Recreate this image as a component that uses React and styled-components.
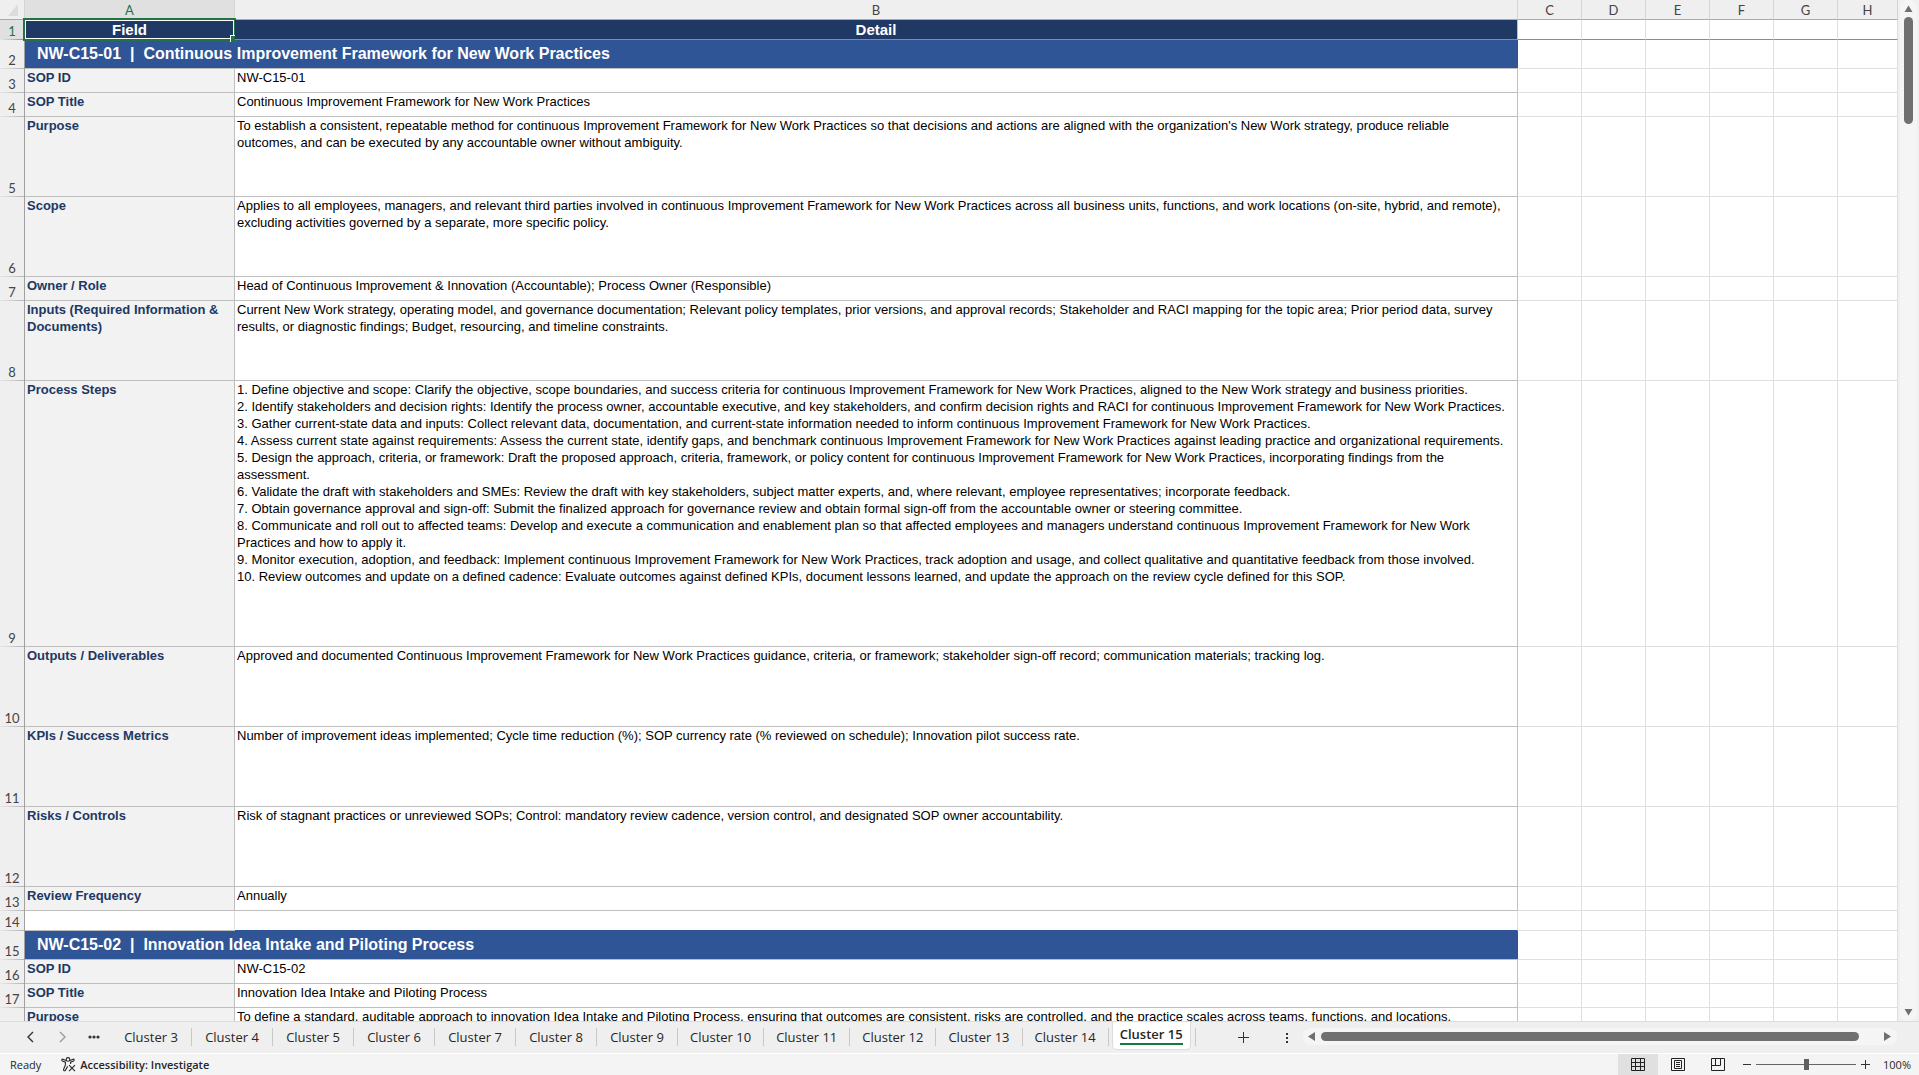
import { Fragment } from 'react';

import styled, { createGlobalStyle, css } from 'styled-components';

const GlobalStyle = createGlobalStyle`
  * {
    box-sizing: border-box;
  }

  body {
    margin: 0;
    background: #f0f0f0;
    overflow: hidden;
  }

  button,
  input {
    margin: 0;
    padding: 0;
    border: 0;
    background: none;
    font: inherit;
    color: inherit;
  }
`;

const uiFont = `'Open Sans', 'Noto Sans', sans-serif`;
const headFont = `Lato, 'Open Sans', sans-serif`;
const cellFont = `'Liberation Sans', Arial, sans-serif`;

const Workbook = styled.div`
  height: 100vh;
  display: flex;
  flex-direction: column;
  font-family: ${uiFont};
  color: #262626;
`;

const SheetArea = styled.main`
  flex: 1;
  min-height: 0;
  display: flex;
  border-bottom: 1px solid #dcdcdc;
`;

const GridClip = styled.div`
  flex: 1;
  min-width: 0;
  overflow: hidden;
`;

const Grid = styled.table`
  width: 100%;
  table-layout: fixed;
  border-collapse: separate;
  border-spacing: 0;
  background: white;

  th,
  td {
    padding: 0;
  }
`;

const Col = styled.col`
  width: ${(props) => (props.$width ? `${props.$width}px` : 'auto')};
`;

const Row = styled.tr`
  height: ${(props) => props.$height}px;
`;

const ColumnHead = styled.th`
  border-right: 1px solid #d4d4d4;
  border-bottom: 1px solid #ababab;
  background: ${(props) => (props.$active ? '#e0e0e0' : '#efefef')};
  color: ${(props) => (props.$active ? '#217346' : '#444')};
  font-family: ${headFont};
  font-size: 13px;
  font-weight: 400;
  line-height: 18px;
  vertical-align: bottom;
`;

const Corner = styled(ColumnHead)`
  background: #efefef;

  svg {
    display: block;
    margin: 0 0 3px 8px;
  }
`;

const RowHead = styled.th`
  border-right: 1px solid #a0a0a0;
  background:
    linear-gradient(to right, #e8e8e8, ${(props) => (props.$frozen ? '#8c8c8c' : '#b4b4b4')})
      bottom / 100% 1px no-repeat,
    ${(props) => (props.$active ? '#e0e0e0' : '#efefef')};
  color: ${(props) => (props.$active ? '#217346' : '#444')};
  font-family: ${headFont};
  font-size: 13px;
  font-weight: 400;
  line-height: 18px;
  vertical-align: bottom;
`;

const cellText = css`
  font-family: ${cellFont};
  font-size: 13px;
  line-height: 17px;
  text-align: left;
  vertical-align: top;
  white-space: pre-line;
`;

const HeaderCell = styled.th`
  position: relative;
  border-right: 1px solid #bfbfbf;
  border-bottom: 1px solid #8c8c8c;
  background: #203864;
  color: white;
  font-family: ${cellFont};
  font-size: 15px;
  line-height: 18px;
`;

const Selection = styled.span`
  position: absolute;
  inset: -2px;
  border: 2px solid #217346;
  box-shadow: inset 0 0 0 1px white;

  &::after {
    content: '';
    position: absolute;
    right: -3px;
    bottom: -3px;
    width: 6px;
    height: 6px;
    border-top: 1px solid white;
    border-left: 1px solid white;
    background: #217346;
  }
`;

const SectionCell = styled.th`
  background: #2f5597;
  border-bottom: 1px solid #bfbfbf;
  color: white;
  font-family: ${cellFont};
  font-size: 16px;
  line-height: 20px;
  text-align: left;
  white-space: pre;

  && {
    padding-left: 12px;
  }
`;

const FieldCell = styled.th`
  ${cellText}
  border-right: 1px solid #bfbfbf;
  border-bottom: 1px solid #bfbfbf;
  background: #f2f2f2;
  color: #203864;

  && {
    padding-left: 2px;
  }
`;

const DetailCell = styled.td`
  ${cellText}
  border-right: 1px solid #bfbfbf;
  border-bottom: 1px solid #bfbfbf;
  color: black;

  && {
    padding-left: 2px;
  }
`;

const EmptyCell = styled.td`
  border-right: 1px solid #dfdfdf;
  border-bottom: 1px solid ${(props) => (props.$frozen ? '#8c8c8c' : '#dfdfdf')};
`;

const GapCell = styled(EmptyCell)`
  border-bottom-color: ${(props) => (props.$filled ? '#2f5597' : '#bfbfbf')};
`;

const VerticalBar = styled.div`
  width: 17px;
  margin: 0 2px;
  padding: 5px 0 4px;
  border-radius: 8px;
  background: #f5f5f5;
  display: flex;
  flex-direction: column;
  align-items: center;
`;

const VerticalThumb = styled.div`
  width: 9px;
  height: 107px;
  margin: 3px 0 auto;
  border-radius: 5px;
  background: #707070;
`;

const ArrowButton = styled.button`
  display: flex;
  align-items: center;
  justify-content: center;
`;

const TabBar = styled.nav`
  height: 31px;
  display: flex;
  align-items: flex-start;
  background: #efefef;
`;

const TabTools = styled.div`
  width: 111px;
  height: 30px;
  padding-left: 24px;
  display: flex;
  align-items: center;
  gap: 20px;
`;

const ToolButton = styled.button`
  display: flex;
  color: ${(props) => (props.$muted ? '#9a9a9a' : '#333')};
`;

const Tab = styled.button`
  min-width: 81px;
  height: 18px;
  margin-top: 6px;
  padding: 0 12px;
  border-right: 1px solid #c8c8c8;
  font-size: 13px;
  line-height: 18px;
  white-space: nowrap;
`;

const ActiveTab = styled.button`
  height: 28px;
  margin: 0 4px 0 3px;
  padding: 3px 7px 4px;
  border: 1px solid #dcdcdc;
  border-top: 0;
  border-radius: 0 0 5px 5px;
  background: white;
  font-size: 13px;
  font-weight: 600;
  line-height: 18px;
  white-space: nowrap;

  span {
    display: block;
    border-bottom: 2px solid #107c41;
  }
`;

const TabDivider = styled.span`
  width: 1px;
  height: 18px;
  margin-top: 6px;
  background: #c8c8c8;
`;

const AddButton = styled(ToolButton)`
  margin: 9px 0 0 41px;
`;

const MoreButton = styled(ToolButton)`
  margin: 10px 14px 0 36px;
`;

const HorizontalBar = styled.div`
  flex: 1;
  height: 17px;
  margin: 6px 22px 0 0;
  padding: 0 5px;
  border-radius: 8px;
  background: #f5f5f5;
  display: flex;
  align-items: center;
`;

const HorizontalThumb = styled.div`
  flex: 1;
  height: 9px;
  margin: 0 24px 0 4px;
  border-radius: 5px;
  background: #707070;
`;

const StatusBar = styled.footer`
  height: 22px;
  padding: 0 8px 0 10px;
  border-top: 1px solid white;
  background: #f4f4f4;
  display: flex;
  align-items: center;
  font-size: 11px;
  line-height: 18px;
`;

const AccessibilityButton = styled.button`
  margin-left: 20px;
  display: flex;
  align-items: center;
  gap: 4px;
  font-weight: 600;
`;

const ViewButtons = styled.div`
  margin-left: auto;
  display: flex;
`;

const ViewButton = styled.button`
  width: 40px;
  height: 21px;
  display: flex;
  align-items: center;
  justify-content: center;
  background: ${(props) => (props.$active ? '#e0e0e0' : 'transparent')};
`;

const Zoom = styled.div`
  margin-left: 5px;
  display: flex;
  align-items: center;
  gap: 5px;
`;

const ZoomSlider = styled.input`
  appearance: none;
  width: 100px;
  height: 11px;
  background: linear-gradient(#666, #666) center / 100% 1px no-repeat;

  &::-webkit-slider-thumb {
    appearance: none;
    width: 5px;
    height: 11px;
    background: #606060;
  }
`;

const ZoomValue = styled.span`
  min-width: 27px;
  margin-left: 8px;
  white-space: nowrap;
`;

const rows = [
  { type: 'section', height: 29, text: 'NW-C15-01  |  Continuous Improvement Framework for New Work Practices' },
  { height: 24, field: 'SOP ID', detail: 'NW-C15-01' },
  { height: 24, field: 'SOP Title', detail: 'Continuous Improvement Framework for New Work Practices' },
  {
    height: 80,
    field: 'Purpose',
    detail: `To establish a consistent, repeatable method for continuous Improvement Framework for New Work Practices so that decisions and actions are aligned with the organization's New Work strategy, produce reliable
outcomes, and can be executed by any accountable owner without ambiguity.`,
  },
  {
    height: 80,
    field: 'Scope',
    detail: `Applies to all employees, managers, and relevant third parties involved in continuous Improvement Framework for New Work Practices across all business units, functions, and work locations (on-site, hybrid, and remote),
excluding activities governed by a separate, more specific policy.`,
  },
  {
    height: 24,
    field: 'Owner / Role',
    detail: 'Head of Continuous Improvement & Innovation (Accountable); Process Owner (Responsible)',
  },
  {
    height: 80,
    field: 'Inputs (Required Information & Documents)',
    detail: `Current New Work strategy, operating model, and governance documentation; Relevant policy templates, prior versions, and approval records; Stakeholder and RACI mapping for the topic area; Prior period data, survey
results, or diagnostic findings; Budget, resourcing, and timeline constraints.`,
  },
  {
    height: 266,
    field: 'Process Steps',
    detail: `1. Define objective and scope: Clarify the objective, scope boundaries, and success criteria for continuous Improvement Framework for New Work Practices, aligned to the New Work strategy and business priorities.
2. Identify stakeholders and decision rights: Identify the process owner, accountable executive, and key stakeholders, and confirm decision rights and RACI for continuous Improvement Framework for New Work Practices.
3. Gather current-state data and inputs: Collect relevant data, documentation, and current-state information needed to inform continuous Improvement Framework for New Work Practices.
4. Assess current state against requirements: Assess the current state, identify gaps, and benchmark continuous Improvement Framework for New Work Practices against leading practice and organizational requirements.
5. Design the approach, criteria, or framework: Draft the proposed approach, criteria, framework, or policy content for continuous Improvement Framework for New Work Practices, incorporating findings from the
assessment.
6. Validate the draft with stakeholders and SMEs: Review the draft with key stakeholders, subject matter experts, and, where relevant, employee representatives; incorporate feedback.
7. Obtain governance approval and sign-off: Submit the finalized approach for governance review and obtain formal sign-off from the accountable owner or steering committee.
8. Communicate and roll out to affected teams: Develop and execute a communication and enablement plan so that affected employees and managers understand continuous Improvement Framework for New Work
Practices and how to apply it.
9. Monitor execution, adoption, and feedback: Implement continuous Improvement Framework for New Work Practices, track adoption and usage, and collect qualitative and quantitative feedback from those involved.
10. Review outcomes and update on a defined cadence: Evaluate outcomes against defined KPIs, document lessons learned, and update the approach on the review cycle defined for this SOP.`,
  },
  {
    height: 80,
    field: 'Outputs / Deliverables',
    detail:
      'Approved and documented Continuous Improvement Framework for New Work Practices guidance, criteria, or framework; stakeholder sign-off record; communication materials; tracking log.',
  },
  {
    height: 80,
    field: 'KPIs / Success Metrics',
    detail:
      'Number of improvement ideas implemented; Cycle time reduction (%); SOP currency rate (% reviewed on schedule); Innovation pilot success rate.',
  },
  {
    height: 80,
    field: 'Risks / Controls',
    detail:
      'Risk of stagnant practices or unreviewed SOPs; Control: mandatory review cadence, version control, and designated SOP owner accountability.',
  },
  { height: 24, field: 'Review Frequency', detail: 'Annually' },
  { type: 'gap', height: 20 },
  { type: 'section', height: 29, text: 'NW-C15-02  |  Innovation Idea Intake and Piloting Process' },
  { height: 24, field: 'SOP ID', detail: 'NW-C15-02' },
  { height: 24, field: 'SOP Title', detail: 'Innovation Idea Intake and Piloting Process' },
  {
    height: 80,
    field: 'Purpose',
    detail:
      'To define a standard, auditable approach to innovation Idea Intake and Piloting Process, ensuring that outcomes are consistent, risks are controlled, and the practice scales across teams, functions, and locations.',
  },
];

const emptyColumns = ['C', 'D', 'E', 'F', 'G', 'H'];

const tabs = [3, 4, 5, 6, 7, 8, 9, 10, 11, 12, 13, 14];

const arrows = {
  up: 'M4.5 0.5 L8.5 7 H0.5 Z',
  down: 'M0.5 1 H8.5 L4.5 7.5 Z',
  left: 'M7 0 V9 L0 4.5 Z',
  right: 'M1 0 V9 L8 4.5 Z',
};

const Arrow = ({ direction }) => (
  <ArrowButton aria-label={`Scroll ${direction}`}>
    <svg width="9" height="9" viewBox="0 0 9 9" fill="#707070">
      <path d={arrows[direction]} />
    </svg>
  </ArrowButton>
);

const EmptyCells = ({ frozen }) =>
  emptyColumns.map((name) => <EmptyCell key={name} $frozen={frozen} />);

const RowContent = ({ row }) => {
  switch (row.type) {
    case 'section':
      return <SectionCell colSpan={2}>{row.text}</SectionCell>;
    case 'gap':
      return (
        <Fragment>
          <GapCell />
          <GapCell $filled />
        </Fragment>
      );
    default:
      return (
        <Fragment>
          <FieldCell scope="row">{row.field}</FieldCell>
          <DetailCell>{row.detail}</DetailCell>
        </Fragment>
      );
  }
};

const Sheet = () => (
  <Grid>
    <colgroup>
      <Col $width={25} />
      <Col $width={210} />
      <Col />
      {emptyColumns.map((name) => (
        <Col key={name} $width={name === 'H' ? 60 : 64} />
      ))}
    </colgroup>
    <thead>
      <Row $height={20}>
        <Corner aria-label="Select all">
          <svg width="10" height="12" viewBox="0 0 10 12">
            <path d="M10 0 V12 H0 Z" fill="#dcdcdc" />
          </svg>
        </Corner>
        <ColumnHead $active>A</ColumnHead>
        <ColumnHead>B</ColumnHead>
        {emptyColumns.map((name) => (
          <ColumnHead key={name}>{name}</ColumnHead>
        ))}
      </Row>
    </thead>
    <tbody>
      <Row $height={20}>
        <RowHead $active $frozen>
          1
        </RowHead>
        <HeaderCell>
          Field
          <Selection />
        </HeaderCell>
        <HeaderCell>Detail</HeaderCell>
        <EmptyCells frozen />
      </Row>
      {rows.map((row, i) => (
        <Row key={i} $height={row.height}>
          <RowHead>{i + 2}</RowHead>
          <RowContent row={row} />
          <EmptyCells />
        </Row>
      ))}
    </tbody>
  </Grid>
);

const SheetTabs = () => (
  <TabBar>
    <TabTools>
      <ToolButton aria-label="Previous sheet">
        <svg width="12" height="12" viewBox="0 0 12 12" fill="none" stroke="currentColor" strokeWidth="1.4">
          <path d="M9 1 L4 6 L9 11" />
        </svg>
      </ToolButton>
      <ToolButton $muted aria-label="Next sheet">
        <svg width="12" height="12" viewBox="0 0 12 12" fill="none" stroke="currentColor" strokeWidth="1.4">
          <path d="M4 1 L9 6 L4 11" />
        </svg>
      </ToolButton>
      <ToolButton aria-label="More sheets">
        <svg width="12" height="12" viewBox="0 0 12 12" fill="currentColor">
          <circle cx="2" cy="6" r="1.6" />
          <circle cx="6" cy="6" r="1.6" />
          <circle cx="10" cy="6" r="1.6" />
        </svg>
      </ToolButton>
    </TabTools>
    {tabs.map((tab) => (
      <Tab key={tab}>Cluster {tab}</Tab>
    ))}
    <ActiveTab>
      <span>Cluster 15</span>
    </ActiveTab>
    <TabDivider />
    <AddButton aria-label="New sheet">
      <svg width="12" height="12" viewBox="0 0 12 12" stroke="currentColor">
        <path d="M6.5 1 V12 M1 6.5 H12" />
      </svg>
    </AddButton>
    <MoreButton aria-label="Tab options">
      <svg width="4" height="12" viewBox="0 0 4 12" fill="currentColor">
        <path d="M1 1 h2 v2 h-2 z M1 5 h2 v2 h-2 z M1 9 h2 v2 h-2 z" />
      </svg>
    </MoreButton>
    <HorizontalBar>
      <Arrow direction="left" />
      <HorizontalThumb />
      <Arrow direction="right" />
    </HorizontalBar>
  </TabBar>
);

const Status = () => (
  <StatusBar>
    <span>Ready</span>
    <AccessibilityButton>
      <svg width="15" height="15" viewBox="0 0 15 15" fill="none" stroke="#262626" strokeWidth="1.1">
        <circle cx="7" cy="2.4" r="1.8" />
        <path d="M5 3.4 L2 2.2 C0.8 2 0.4 3.4 1.4 3.9 L4.4 5.2 V8 L2.6 12.4 C2.4 13.8 3.8 14.2 4.4 13.2 L6.6 9.4" />
        <path d="M9 3.4 L12 2.2 C13.2 2 13.6 3.4 12.6 3.9 L9.6 5.2 V7" />
        <path d="M8 8.2 L14 14.2 M14 8.2 L8 14.2" />
      </svg>
      Accessibility: Investigate
    </AccessibilityButton>
    <ViewButtons>
      <ViewButton $active aria-label="Normal view">
        <svg width="14" height="14" viewBox="0 0 14 14" fill="none" stroke="#222">
          <path d="M0.5 0.5 H13.5 V12.5 H0.5 Z M0.5 4.5 H13.5 M0.5 8.5 H13.5 M4.5 0.5 V12.5 M9.5 0.5 V12.5" />
        </svg>
      </ViewButton>
      <ViewButton aria-label="Page layout view">
        <svg width="14" height="14" viewBox="0 0 14 14" fill="none" stroke="#222">
          <path d="M0.5 0.5 H13.5 V12.5 H0.5 Z M3.5 2.5 H10.5 V10.5 H3.5 Z M5 4.5 H9 M5 6.5 H9 M5 8.5 H9" />
        </svg>
      </ViewButton>
      <ViewButton aria-label="Page break preview">
        <svg width="14" height="14" viewBox="0 0 14 14" fill="none" stroke="#222">
          <path d="M0.5 0.5 H13.5 V12.5 H0.5 Z M4.5 0.5 V7.5 M9.5 0.5 V7.5 M0.5 7.5 H9.5" />
        </svg>
      </ViewButton>
    </ViewButtons>
    <Zoom>
      <ToolButton aria-label="Zoom out">
        <svg width="8" height="9" viewBox="0 0 8 9" stroke="#333">
          <path d="M0 4.5 H8" />
        </svg>
      </ToolButton>
      <ZoomSlider type="range" min="0" max="200" defaultValue="100" aria-label="Zoom" />
      <ToolButton aria-label="Zoom in">
        <svg width="9" height="9" viewBox="0 0 9 9" stroke="#333">
          <path d="M0 4.5 H9 M4.5 0 V9" />
        </svg>
      </ToolButton>
      <ZoomValue>100%</ZoomValue>
    </Zoom>
  </StatusBar>
);

const App = () => (
  <Workbook>
    <GlobalStyle />
    <SheetArea>
      <GridClip>
        <Sheet />
      </GridClip>
      <VerticalBar>
        <Arrow direction="up" />
        <VerticalThumb />
        <Arrow direction="down" />
      </VerticalBar>
    </SheetArea>
    <SheetTabs />
    <Status />
  </Workbook>
);

export default App;
